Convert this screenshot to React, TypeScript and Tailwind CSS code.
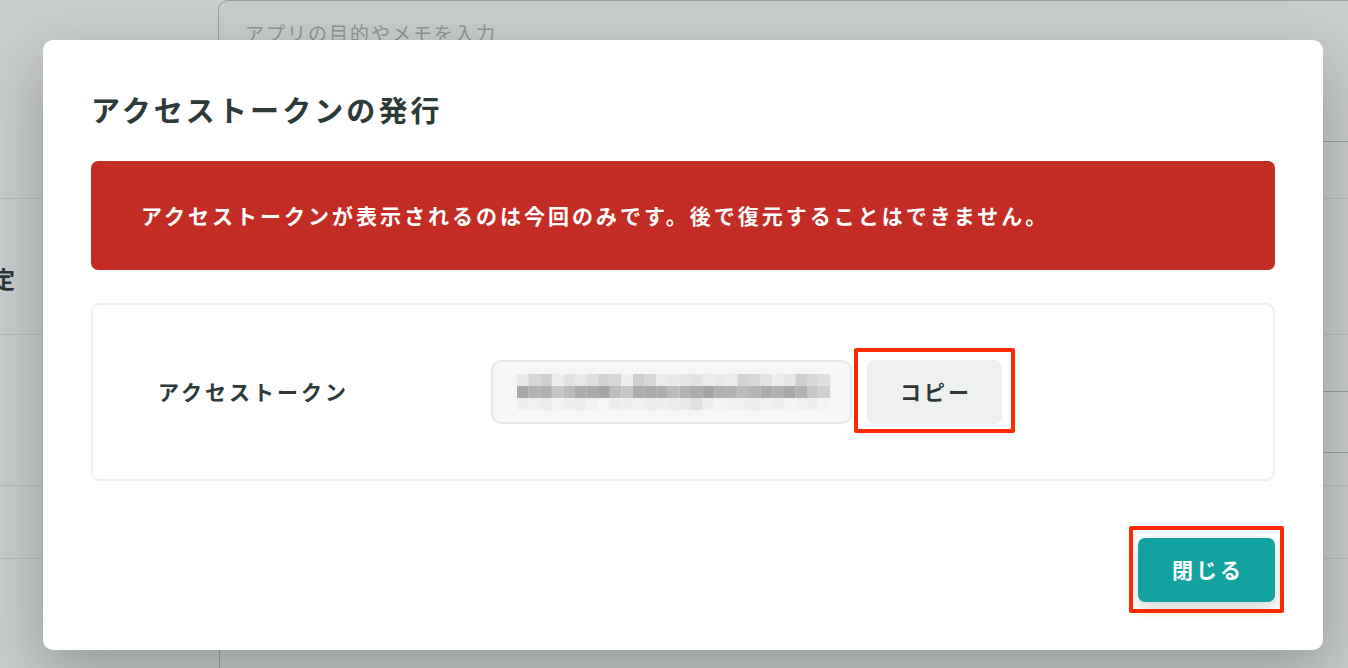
import React from "react";

const font = { fontFamily: '"Noto Sans CJK JP", "Noto Sans", sans-serif' };

// pixelated (mosaic) token preview
const mosaicRows: number[][] = [
  [232, 214, 206, 236, 226, 232, 222, 210, 214, 238, 206, 214, 234, 232, 230, 226, 236, 232, 236, 210, 214, 226, 236, 230, 206, 214, 222],
  [168, 178, 176, 196, 186, 172, 170, 164, 188, 196, 172, 170, 172, 186, 178, 172, 164, 176, 178, 186, 180, 172, 176, 168, 178, 198, 206],
  [238, 240, 236, 242, 238, 236, 240, 244, 236, 238, 240, 236, 238, 236, 232, 224, 238, 242, 240, 238, 236, 240, 238, 242, 240, 238, 242],
];

const TokenMosaic = () => (
  <svg width="313" height="36" viewBox="0 0 313 36" className="block">
    {mosaicRows.map((row, r) =>
      row.map((v, c) => (
        <rect
          key={`${r}-${c}`}
          x={c * 11.6}
          y={r * 12}
          width={11.7}
          height={12}
          fill={`rgb(${v},${v + 2},${v + 1})`}
        />
      ))
    )}
  </svg>
);

const Background = () => (
  <div className="w-full h-[668px] bg-white overflow-hidden" style={font}>
    <div className="flex h-[198px]">
      <div className="w-[218px] shrink-0" />
      <div className="w-[1200px] h-[142px] shrink-0 rounded-tl-[10px] border border-[#c0c4c4] px-[26px] pt-[18px] text-[19px] tracking-[2px] text-[#b4b6b5]">
        アプリの目的やメモを入力
      </div>
    </div>
    <div className="flex h-[137px] items-center border-y border-[#e6e8e8] pt-[24px]">
      <div className="-ml-[8px] text-[23px] font-bold text-[#2e3a38]">定</div>
    </div>
    <div className="flex h-[150px]">
      <div className="w-[220px] shrink-0" />
      <div className="mt-[56px] h-[62px] w-[1200px] border-y border-[#c0c4c4]" />
    </div>
    <div className="h-[74px] border-y border-[#e6e8e8]" />
    <div className="flex h-[110px]">
      <div className="w-[220px] shrink-0 border-r border-[#c0c4c4]" />
    </div>
  </div>
);

const Modal = () => (
  <div
    className="absolute left-[43px] top-[40px] flex h-[610px] w-[1280px] flex-col rounded-[10px] bg-white p-12 shadow-[0_24px_60px_rgba(20,30,30,0.28)]"
    style={font}
  >
    <h1 className="text-[29px] font-bold leading-[42px] tracking-[3.1px] text-[#2e3a38]">アクセストークンの発行</h1>

    <div className="mt-[31px] flex h-[109px] items-center rounded-[7px] bg-[#c42c26] pl-[50px] text-[21px] font-bold tracking-[3px] text-white">
      アクセストークンが表示されるのは今回のみです。後で復元することはできません。
    </div>

    <div className="mt-[33px] flex h-[178px] items-center rounded-[9px] border-2 border-[#efefef] pl-[65px]">
      <div className="w-[333px] shrink-0 text-[21px] font-bold tracking-[3px] text-[#2e3a38]">アクセストークン</div>
      <div className="flex h-[64px] w-[361px] items-center rounded-[10px] border-2 border-[#e6e7e6] bg-[#f6f6f6] pl-[24px]">
        <TokenMosaic />
      </div>
      <button className="relative ml-[15px] h-[64px] w-[135px] rounded-[7px] bg-[#eff1f0] pl-[3px] text-[21px] font-bold tracking-[3px] text-[#2e3a38]">
        コピー
        <span className="pointer-events-none absolute -left-[13px] -right-[13px] -top-[12px] -bottom-[9px] rounded-[2px] border-[4px] border-[#ff2a00]" />
      </button>
    </div>

    <div className="mt-auto flex justify-end">
      <button className="relative h-[64px] w-[137px] rounded-[7px] bg-[#12a3a0] pl-[3px] text-[21px] font-bold tracking-[3px] text-white shadow-[0_6px_16px_rgba(0,0,0,0.18)]">
        閉じる
        <span className="pointer-events-none absolute -left-[9px] -right-[9px] -top-[12px] -bottom-[11px] rounded-[2px] border-4 border-[#ff2a00]" />
      </button>
    </div>
  </div>
);

export default function App() {
  return (
    <div className="relative h-[668px] w-full overflow-hidden">
      <Background />
      <div className="absolute inset-0 bg-[rgba(40,52,50,0.25)]">
        <Modal />
      </div>
    </div>
  );
}
